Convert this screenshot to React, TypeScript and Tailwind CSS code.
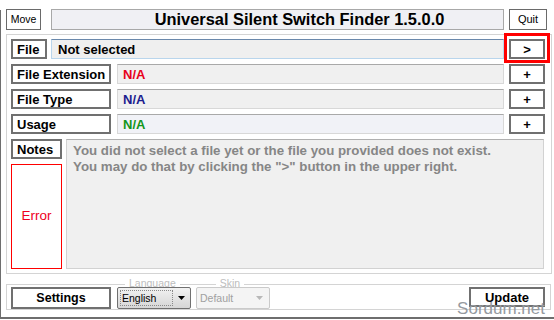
import React from 'react';

const labelBox =
  'flex h-[20px] shrink-0 items-center border-2 border-[#707070] bg-white pl-[4px] text-[13px] font-bold leading-none text-black';
const valueBox =
  'flex h-[20px] items-center border border-[#d8d8d8] border-t-[#a9a9a9] pl-[5px] text-[13px] font-bold leading-none';
const plusBtn =
  'ml-[5px] flex h-[20px] w-[36px] shrink-0 items-center justify-center border-2 border-[#707070] bg-white text-[13px] font-bold leading-none text-black';

const infoRows = [
  { label: 'File Extension', value: 'N/A', color: 'text-[#e8001a]', bg: 'bg-[#f0f0f0]' },
  { label: 'File Type', value: 'N/A', color: 'text-[#1c1c8e]', bg: 'bg-[#f0f0f0]' },
  { label: 'Usage', value: 'N/A', color: 'text-[#13961b]', bg: 'bg-[#f1f2f7]' },
];

const Caret = ({ color }: { color: string }) => (
  <svg width="7" height="4" viewBox="0 0 7 4" className="shrink-0">
    <path d="M0 0h7L3.5 4z" fill={color} />
  </svg>
);

export default function App() {
  return (
    <div className="relative h-[320px] w-[554px] overflow-hidden bg-white pt-[10px] font-['Liberation_Sans',Arial,sans-serif] text-black">
      <div className="flex h-[309px] flex-col border-b-2 border-l border-[#6e6e6e] pl-[5px]">
        {/* Title bar */}
        <div className="-mt-px flex h-[21px] items-stretch">
          <button className="w-[35px] border border-[#6a6a6a] bg-white text-[10.5px] leading-none">Move</button>
          <div className="ml-[10px] flex w-[453px] items-center justify-center border border-[#a8a8a8] bg-[#f0f0f4] pl-[44px] text-[16.4px] font-bold leading-none">
            Universal Silent Switch Finder 1.5.0.0
          </div>
          <button className="ml-[5px] w-[38px] border border-[#6a6a6a] bg-white text-[11px] leading-none">Quit</button>
        </div>

        {/* Main group */}
        <div className="mt-[4px] flex w-[546px] flex-col gap-[5px] border border-[#d4d4d4] p-[4px]">
          <div className="flex">
            <div className={`${labelBox} w-[36px]`}>File</div>
            <div className="ml-[4px] flex h-[20px] w-[453px] items-center border border-[#b9d5ec] border-t-[#6a88ab] bg-[#efefef] pl-[6px] text-[13px] font-bold leading-none">
              Not selected
            </div>
            <button className={plusBtn}>&gt;</button>
          </div>

          {infoRows.map((row) => (
            <div key={row.label} className="flex">
              <div className={`${labelBox} w-[100px]`}>{row.label}</div>
              <div className={`${valueBox} ${row.bg} ${row.color} ml-[6px] w-[387px]`}>{row.value}</div>
              <button className={plusBtn}>+</button>
            </div>
          ))}

          <div className="flex">
            <div className="flex w-[51px] shrink-0 flex-col">
              <div className={`${labelBox} w-[51px]`}>Notes</div>
              <div className="mt-[5px] flex h-[105px] items-center justify-center border border-[#ff0000] bg-white text-[13.5px] text-[#ee0022]">
                Error
              </div>
            </div>
            <div className="ml-[4px] h-[130px] w-[478px] border border-[#d2d2d2] border-t-[#b0b0b0] bg-[#f0f0f0] pl-[6px] pt-[3px] text-[13.3px] font-bold leading-[15.5px] text-[#868686]">
              <p>You did not select a file yet or the file you provided does not exist.</p>
              <p>{'You may do that by clicking the ">" button in the upper right.'}</p>
            </div>
          </div>
        </div>

        {/* Bottom group */}
        <div className="mt-[10px] w-[545px] border border-[#d4d4d4]">
          <div className="-mt-[2px] flex h-0 items-center text-[10.5px] leading-none text-[#bdbdbd]">
            <span className="ml-[118px] bg-white px-[4px]">Language</span>
            <span className="ml-[36px] bg-white px-[4px]">Skin</span>
          </div>
          <div className="mt-[4px] flex h-[22px] items-stretch pl-[4px] pr-[5px]">
            <button className="w-[100px] border-2 border-[#707070] bg-white text-[12.5px] font-bold leading-none">
              Settings
            </button>
            <div className="ml-[6px] flex w-[74px] items-center rounded-[2px] border border-[#707070] bg-linear-to-b from-[#f2f2f2] to-[#d6d6d6] p-[2px] pr-[5px]">
              <div className="flex h-full flex-1 items-center border border-dotted border-[#8a8a8a] pl-[1px] text-[10.5px] leading-none">
                English
              </div>
              <span className="ml-[5px]">
                <Caret color="#000" />
              </span>
            </div>
            <div className="ml-[5px] flex w-[74px] items-center rounded-[2px] border border-[#cacaca] bg-[#f4f4f4] pl-[3px] pr-[6px] text-[10.5px] leading-none text-[#a0a0a0]">
              <span className="flex-1">Default</span>
              <Caret color="#b8b8b8" />
            </div>
            <button className="ml-auto h-[20px] w-[76px] border-2 border-[#707070] bg-white text-[13px] font-bold leading-none">
              Update
            </button>
          </div>
        </div>
      </div>

      {/* screenshot annotation + watermark */}
      <div className="absolute left-[504px] top-[33px] h-[30px] w-[46px] border-[3px] border-[#ff0000]" />
      <div className="absolute right-[9px] top-[300px] text-[17px] leading-none text-[#959a9f]">Sordum.net</div>
    </div>
  );
}
